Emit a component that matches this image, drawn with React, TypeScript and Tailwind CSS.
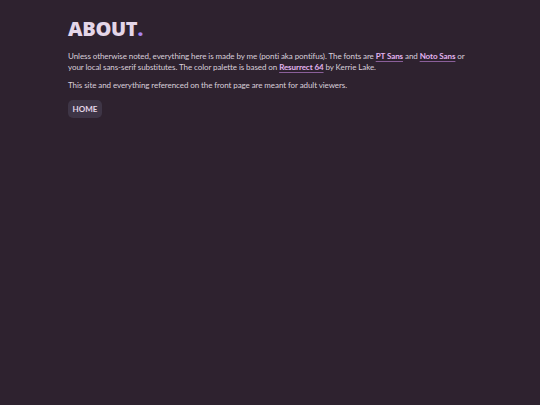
export default function App() {
  const link = "font-bold text-[#e2b4ef] underline decoration-[#8a5f9a] underline-offset-[1.5px]";
  return (
    <div className="min-h-[405px] w-full bg-[#2e222f] text-[#d9cfdb]" style={{ fontFamily: 'Lato, sans-serif' }}>
      <div className="px-[68px] pt-[19px]">
        <h1 className="text-[20px] leading-[20px] font-black text-[#e4d6e8] tracking-[-0.3px]" style={{ fontFamily: '"Open Sans", sans-serif' }}>
          ABOUT<span className="text-[#a884f3]">.</span>
        </h1>
        <p className="mt-[12px] text-[8px] leading-[11px] max-w-[408px] tracking-[-0.08px]">
          Unless otherwise noted, everything here is made by me (ponti aka pontifus). The fonts are <a className={link}>PT Sans</a> and <a className={link}>Noto Sans</a> or your local sans-serif substitutes. The color palette is based on <a className={link}>Resurrect 64</a> by Kerrie Lake.
        </p>
        <p className="mt-[7px] text-[8px] leading-[11px] tracking-[-0.08px]">
          This site and everything referenced on the front page are meant for adult viewers.
        </p>
        <div className="mt-[3px]">
          <span className="inline-flex h-[18px] items-center rounded-[5px] bg-[#3e3546] px-[4.5px] text-[8px] font-bold text-[#e4d6e8]">HOME</span>
        </div>
      </div>
    </div>
  );
}
